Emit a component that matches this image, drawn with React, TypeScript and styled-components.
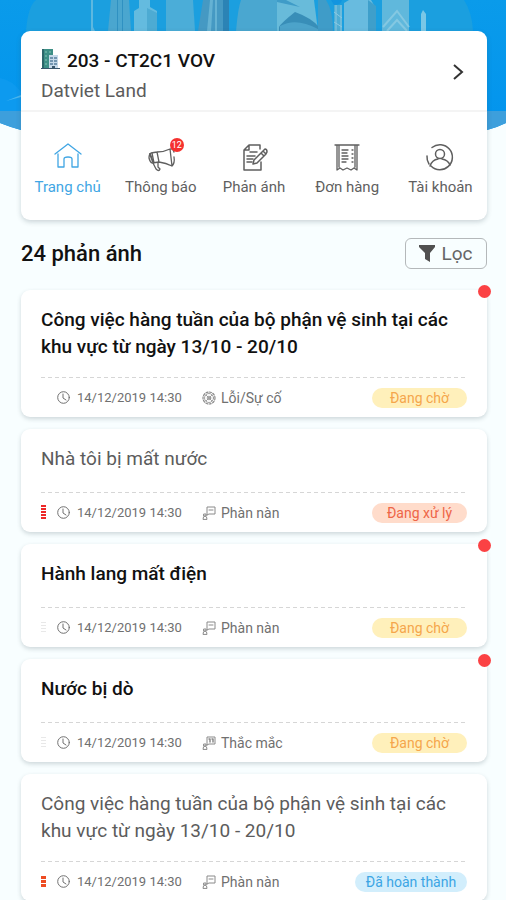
import React from "react";
import styled, { createGlobalStyle } from "styled-components";

const GlobalStyle = createGlobalStyle`
  *, *::before, *::after { box-sizing: border-box; }
  body {
    margin: 0;
    background: #f8feff;
    color: #111;
    font-family: Roboto, "Liberation Sans", sans-serif;
  }
  h1, h2, p { margin: 0; font-weight: inherit; font-size: inherit; }
  button { font: inherit; color: inherit; border: 0; background: none; padding: 0; cursor: pointer; }
`;

const Page = styled.main`
  position: relative;
  padding: 31px 19px 0 21px;
`;

const Skyline = styled.svg`
  position: absolute;
  top: 0;
  left: 0;
  width: 100%;
  height: 131px;
`;

const Panel = styled.section`
  position: relative;
  background: #fff;
  border-radius: 9px;
  box-shadow: 0 2px 5px rgba(60, 80, 90, 0.24);
`;

const Apartment = styled.button`
  && {
    display: flex;
    align-items: flex-start;
    justify-content: space-between;
    width: 100%;
    padding: 15px 20px 5px;
    text-align: left;
    border-bottom: 2px solid #f4f4f4;
  }
`;

const Chevron = styled.svg`
  margin-top: 17px;
`;

const ApartmentName = styled.span`
  display: flex;
  align-items: flex-start;
  gap: 7px;
  font-size: 19px;
  font-weight: 500;
  line-height: 30px;

  svg { margin-top: 3px; }
`;

const Developer = styled.span`
  display: block;
  font-size: 19px;
  line-height: 29px;
  color: #5c5c5c;
`;

const Tabs = styled.nav`
  display: grid;
  grid-template-columns: repeat(5, 1fr);
  padding: 30px 0 23px;
`;

const Tab = styled.a<{ $active?: boolean }>`
  display: flex;
  flex-direction: column;
  align-items: center;
  gap: 5px;
  font-size: 15px;
  line-height: 20px;
  white-space: nowrap;
  text-decoration: none;
  color: ${(p) => (p.$active ? "#41a6e4" : "#5f5f5f")};
`;

const TabIcon = styled.span`
  position: relative;
  display: flex;
  height: 30px;
  color: inherit;
`;

const Count = styled.span`
  position: absolute;
  top: -4px;
  right: -8px;
  width: 14px;
  height: 14px;
  border-radius: 50%;
  background: #f5312f;
  color: #fff;
  font-size: 9px;
  line-height: 14px;
  text-align: center;
`;

const ListHeader = styled.header`
  display: flex;
  align-items: center;
  justify-content: space-between;
  padding: 18px 0 21px;
`;

const Heading = styled.h1`
  && { font-size: 22px; font-weight: 500; }
  line-height: 30px;
`;

const FilterButton = styled.button`
  && {
    display: flex;
    align-items: center;
    justify-content: center;
    gap: 6px;
    width: 82px;
    height: 31px;
    border: 1px solid #b4b8ba;
    border-radius: 6px;
    font-size: 19px;
    color: #666;
  }
`;

const List = styled.div`
  display: flex;
  flex-direction: column;
  gap: 12px;
`;

const Card = styled.article`
  position: relative;
  padding: 16px 20px 0;
  background: #fff;
  border-radius: 9px;
  box-shadow: 0 2px 4px rgba(60, 80, 90, 0.22);
`;

const UnreadDot = styled.span`
  position: absolute;
  top: -5px;
  right: -4px;
  width: 13px;
  height: 13px;
  border-radius: 50%;
  background: #fb4244;
`;

const Title = styled.h2<{ $unread?: boolean }>`
  && {
    font-size: 19px;
    font-weight: ${(p) => (p.$unread ? 500 : 400)};
  }
  min-height: 30px;
  line-height: 27px;
  color: ${(p) => (p.$unread ? "#111" : "#5c5c5c")};
`;

const Dashes = styled.hr`
  height: 1px;
  margin: 17px 0 0;
  border: 0;
  background: repeating-linear-gradient(90deg, #d6d6d6 0 4px, transparent 4px 7px);
`;

const Meta = styled.footer`
  display: flex;
  align-items: center;
  height: 39px;
  font-size: 14px;
  color: #707070;
`;

const Priority = styled.span`
  display: flex;
  align-items: center;
  width: 16px;
`;

const Stamp = styled.time`
  display: flex;
  align-items: center;
  gap: 7px;
  width: 145px;
  font-size: 13px;
`;

const Kind = styled.span`
  display: flex;
  align-items: center;
  gap: 5px;
`;

type Tone = "waiting" | "working" | "done";

const tones: Record<Tone, { bg: string; fg: string; width: number }> = {
  waiting: { bg: "#fff0bb", fg: "#f5a64b", width: 95 },
  working: { bg: "#ffdccb", fg: "#ee6547", width: 95 },
  done: { bg: "#d2eefc", fg: "#3ba5e4", width: 112 },
};

const Status = styled.span<{ $tone: Tone }>`
  margin-left: auto;
  width: ${(p) => tones[p.$tone].width}px;
  border-radius: 10px;
  background: ${(p) => tones[p.$tone].bg};
  color: ${(p) => tones[p.$tone].fg};
  font-size: 14px;
  line-height: 20px;
  text-align: center;
`;

function City() {
  return (
    <Skyline viewBox="0 0 506 131" preserveAspectRatio="none" aria-hidden="true">
      <defs>
        <linearGradient id="sky" x1="0" y1="0" x2="0" y2="1">
          <stop offset="0" stopColor="#0a9bea" />
          <stop offset="1" stopColor="#0294ee" />
        </linearGradient>
      </defs>
      <path d="M0 0H506V123Q498 127 487 130H21Q10 127 0 123Z" fill="url(#sky)" />
      <path d="M26 31Q28 6 36 0H464Q472 12 473 31Z" fill="#1b9fdf" />
      <path d="M0 78Q12 80 21 92V111H0Z" fill="#0d9aef" />
      <path d="M6 101L21 95V97Z" fill="#4bb7ef" />
      <path d="M0 111H506V123Q498 127 487 130H21Q10 127 0 123Z" fill="#3d9fdc" />
      <path d="M91 31V0h2v27l2 4z" fill="#5db8e0" />
      <path d="M108 31L111 0h18l2 31z" fill="#4aa6cf" />
      <path d="M117 31V0h1v31zM122 31V0h1v31z" fill="#2f91c2" />
      <path d="M134 31V11l5-3V0h11v7l7 4v20z" fill="#64bbdf" />
      <path d="M147 31V8l10 5v18z" fill="#4dabd3" />
      <path d="M166 31V0h27l2 31z" fill="#4badd8" />
      <path d="M198 31L203 0h26v31z" fill="#4599c3" />
      <path d="M207 31L210 0h3l-2 31zM215 31V0h2v31z" fill="#65b2d3" />
      <path d="M223 31V0h6v31z" fill="#2b83b5" />
      <path d="M236 31Q238 8 241 0H277V31z" fill="#4aa7d0" />
      <path d="M277 31V0h37l4 31z" fill="#68bbda" />
      <path d="M277 0h9l14 7-14-3-9-2z" fill="#3f9cc8" />
      <path d="M279 27Q281 23 295 12Q312 18 320 28V31H279z" fill="#388eb8" />
      <path d="M280 31V26Q296 17 318 29V31z" fill="#4ca3ca" />
      <path d="M318 31V0h8q7 10 7 31z" fill="#3f9cc8" />
      <path d="M344 31V3l5-3h22l3 5v26z" fill="#68bbdf" />
      <path d="M331 0h11q-1 5-8 5z" fill="#1295df" />
      <path d="M334 31V5h8v26z" fill="#4fadd4" />
      <path d="M336 5v26M341 5v26M334 12l8 6M334 22l8 5" stroke="#8cc9e2" strokeWidth="1" />
      <path d="M368 0l8 6v25h-8z" fill="#3e9fcb" />
      <path d="M382 31V0h27v31z" fill="#60b8dc" />
      <path d="M383 27L397 11L409 27M387 31l10-11 10 11" stroke="#84c8e2" strokeWidth="2" fill="none" />
      <path d="M421 31V14l2-4 3 4v17z" fill="#7ac7e6" />
    </Skyline>
  );
}

function BuildingIcon() {
  return (
    <svg width="19" height="20" viewBox="0 0 19 20" aria-hidden="true">
      <path d="M1 0h11v20H1z" fill="#3d8f86" />
      <path d="M1 0h2v20H1z" fill="#2d666a" />
      <path d="M4 3h2M8 3h2M4 7h2M4 11h2M4 15h2" stroke="#6db3a6" strokeWidth="1.5" />
      <path d="M8 6h9v14H8z" fill="#c5d9e9" />
      <path d="M9 9h3M13 9h3M9 12h3M13 12h3M9 15h3M13 15h3" stroke="#577f9d" strokeWidth="1.5" />
      <path d="M11 17h3v3h-3zM0 19h19v1H0z" fill="#38566c" />
    </svg>
  );
}

const line = { fill: "none", stroke: "currentColor", strokeWidth: 1.3, strokeLinecap: "round", strokeLinejoin: "round" } as const;

function HomeIcon() {
  return (
    <svg width="30" height="30" viewBox="0 0 30 30" {...line}>
      <path d="M2 12L15 2l13 10M5 12v13h6v-8q0-2 4-2t4 2v8h6V12" />
    </svg>
  );
}

function MegaphoneIcon() {
  return (
    <svg width="30" height="30" viewBox="0 0 30 30" {...line}>
      <path d="M5 11l6-1q7 0 13-3l2 17q-6-3-13-4l-7 1q-2-1-3-5 0-4 2-5zM11 10l2 10M24 7q3-1 4 3M28 15q1 6-2 9M7 21l3 6q3 3 4 0l-2-2v-5M6 11l2 10" />
      <path d="M4 12l3 8" strokeWidth="2" />
    </svg>
  );
}

function FeedbackIcon() {
  return (
    <svg width="30" height="30" viewBox="0 0 30 30" {...line} strokeWidth={1.5}>
      <path d="M21 7V3H10L5 8v20h17v-8M10 3v5H5M11 10h7M8 14h8M8 17h6M8 20h5" />
      <path d="M15 18L24 9l3 3-9 9-4 1zM22 11l3 3M24 9l2-2q2 0 2 3l-1 2" />
    </svg>
  );
}

function OrdersIcon() {
  return (
    <svg width="30" height="30" viewBox="0 0 30 30" {...line}>
      <path d="M3 3h24M5 3v25l3-2 3 2 4-2 4 2 3-2 3 2V3M7 4v21M23 4v21" />
      <path d="M10 8h6M10 11h5M10 14h6M10 17h6M10 20h4M20 8h1M20 12h1M20 16h1M20 20h1" />
    </svg>
  );
}

function AccountIcon() {
  return (
    <svg width="30" height="30" viewBox="0 0 30 30" {...line} strokeWidth={1.5}>
      <path d="M7 5.500A12.500 12.500 0 1 1 6 24M4 22A13 13 0 0 1 2 14" />
      <circle cx="15" cy="12" r="4.5" />
      <path d="M5 24q2-6 8-7M17 17q6 1 8 6" />
    </svg>
  );
}

function ClockIcon() {
  return (
    <svg width="13" height="13" viewBox="0 0 13 13" {...line} strokeWidth={1}>
      <circle cx="6.5" cy="6.5" r="5.8" />
      <path d="M6 3v4l3 2" />
    </svg>
  );
}

type KindName = "incident" | "complaint" | "question";

function KindIcon({ kind }: { kind: KindName }) {
  if (kind === "incident") {
    return (
      <svg width="14" height="14" viewBox="0 0 14 14" {...line} stroke="#8a8a8a" strokeWidth={0.8}>
        <circle cx="7" cy="7" r="6" strokeDasharray="2 1.5" strokeWidth="1.2" />
        <circle cx="7" cy="7" r="4.5" />
        <circle cx="7" cy="7" r="1.8" />
        <path d="M4 10l6-6M4 4l6 6" />
      </svg>
    );
  }
  return (
    <svg width="14" height="14" viewBox="0 0 14 14" {...line} stroke="#8a8a8a" strokeWidth={1}>
      <path d="M5 9V1h8v7H7L5 9zM1 13q0-3 2-3t2 3zM2 8h2v2H2z" />
      {kind === "complaint" ? <path d="M7 4h4" /> : <path d="M7 3h1v3M10 3h1v3" strokeWidth="1.5" />}
    </svg>
  );
}

const bars = {
  high: { color: "#ed2828", count: 5, label: "Ưu tiên cao" },
  medium: { color: "#ee4c22", count: 3, label: "Ưu tiên vừa" },
  low: { color: "#e8e8e8", count: 4, label: "Ưu tiên thấp" },
};

function PriorityBars({ level }: { level: keyof typeof bars }) {
  const { color, count, label } = bars[level];
  const step = level === "medium" ? 4 : 3;
  const thickness = level === "low" ? 1 : level === "medium" ? 3 : 2;
  const height = count * step;
  return (
    <svg width="5" height={height} viewBox={`0 0 5 ${height}`} role="img" aria-label={label}>
      {Array.from({ length: count }, (_, i) => (
        <rect key={i} y={i * step} width="5" height={thickness} fill={color} />
      ))}
    </svg>
  );
}

const tabs = [
  { label: "Trang chủ", icon: <HomeIcon />, active: true },
  { label: "Thông báo", icon: <MegaphoneIcon />, count: 12 },
  { label: "Phản ánh", icon: <FeedbackIcon /> },
  { label: "Đơn hàng", icon: <OrdersIcon /> },
  { label: "Tài khoản", icon: <AccountIcon /> },
];

const weekly = "Công việc hàng tuần của bộ phận vệ sinh tại các khu vực từ ngày 13/10 - 20/10";

type Item = {
  title: string;
  unread?: boolean;
  level?: keyof typeof bars;
  kind: KindName;
  kindLabel: string;
  tone: Tone;
  status: string;
};

const items: Item[] = [
  { title: weekly, unread: true, kind: "incident", kindLabel: "Lỗi/Sự cố", tone: "waiting", status: "Đang chờ" },
  { title: "Nhà tôi bị mất nước", level: "high", kind: "complaint", kindLabel: "Phàn nàn", tone: "working", status: "Đang xử lý" },
  { title: "Hành lang mất điện", unread: true, level: "low", kind: "complaint", kindLabel: "Phàn nàn", tone: "waiting", status: "Đang chờ" },
  { title: "Nước bị dò", unread: true, level: "low", kind: "question", kindLabel: "Thắc mắc", tone: "waiting", status: "Đang chờ" },
  { title: weekly, level: "medium", kind: "complaint", kindLabel: "Phàn nàn", tone: "done", status: "Đã hoàn thành" },
];

export default function App() {
  return (
    <Page>
      <GlobalStyle />
      <City />
      <Panel>
        <Apartment type="button">
          <span>
            <ApartmentName><BuildingIcon />203 - CT2C1 VOV</ApartmentName>
            <Developer>Datviet Land</Developer>
          </span>
          <Chevron width="18" height="18" viewBox="0 0 18 18" fill="none" stroke="#333" strokeWidth="2" aria-hidden="true">
            <path d="M5 2l8 7-8 7" />
          </Chevron>
        </Apartment>
        <Tabs>
          {tabs.map((tab) => (
            <Tab key={tab.label} href="#" $active={tab.active}>
              <TabIcon>
                {tab.icon}
                {tab.count && <Count>{tab.count}</Count>}
              </TabIcon>
              {tab.label}
            </Tab>
          ))}
        </Tabs>
      </Panel>
      <ListHeader>
        <Heading>24 phản ánh</Heading>
        <FilterButton type="button">
          <svg width="16" height="17" viewBox="0 0 16 17" fill="#505050" aria-hidden="true">
            <path d="M0 0h16v2l-5 6v9l-5-3V8L0 2z" />
          </svg>
          Lọc
        </FilterButton>
      </ListHeader>
      <List>
        {items.map((item, index) => (
          <Card key={index}>
            {item.unread && <UnreadDot />}
            <Title $unread={item.unread}>{item.title}</Title>
            <Dashes />
            <Meta>
              <Priority>{item.level && <PriorityBars level={item.level} />}</Priority>
              <Stamp dateTime="2019-12-14T14:30"><ClockIcon />14/12/2019 14:30</Stamp>
              <Kind><KindIcon kind={item.kind} />{item.kindLabel}</Kind>
              <Status $tone={item.tone}>{item.status}</Status>
            </Meta>
          </Card>
        ))}
      </List>
    </Page>
  );
}
